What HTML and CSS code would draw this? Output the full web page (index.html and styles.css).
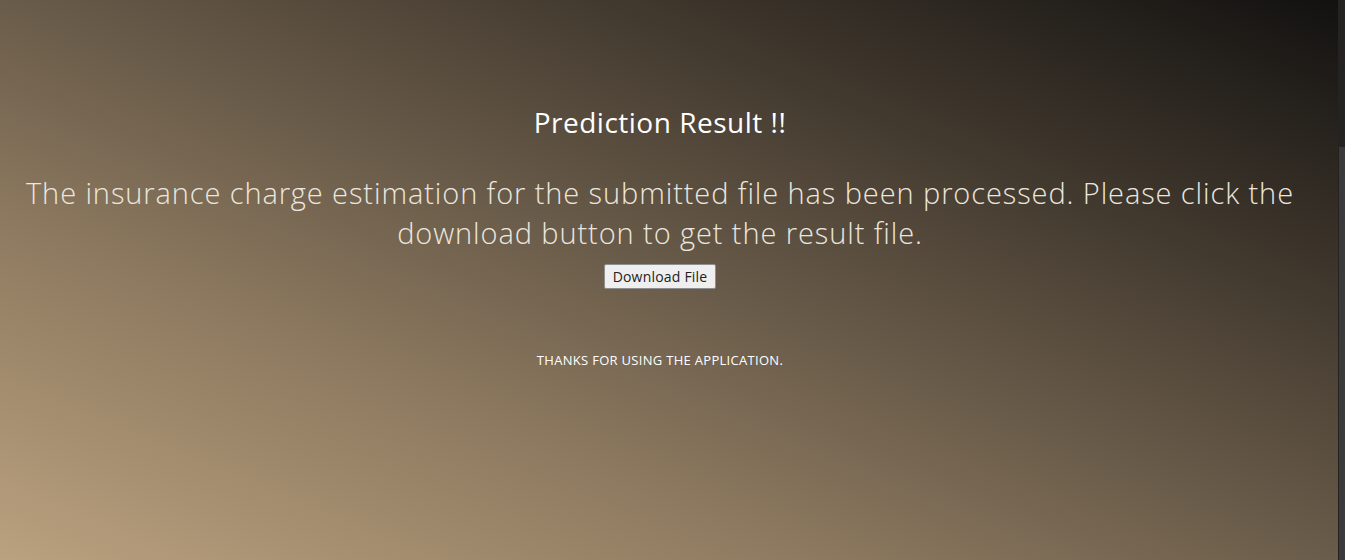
FILE: index.html
```html
<!DOCTYPE html>
<html lang="en">
<head>
<meta charset="utf-8">
<title>Prediction Result</title>
<link rel="stylesheet" href="styles.css">
</head>
<body>
<main class="page">
  <section class="result">
    <h2 class="result-title">Prediction Result !!</h2>
    <p class="result-text">The insurance charge estimation for the submitted file has been processed. Please click the download button to get the result file.</p>
    <button class="download-btn" type="button">Download File</button>
    <p class="thanks">THANKS FOR USING THE APPLICATION.</p>
  </section>
</main>
<div class="scrollbar"><div class="scrollbar-thumb"></div></div>
</body>
</html>
```
FILE: styles.css
```css
html, body {
  margin: 0;
  padding: 0;
  height: 100%;
  overflow: hidden;
}
body {
  font-family: "Open Sans", "Liberation Sans", sans-serif;
  color: #fff;
  background: linear-gradient(to top right, #baa17f 0%, #8e7a60 30%, #6a5c4a 50%, #433a2f 72%, #121110 100%);
}
.page {
  width: 1320px;
  height: 560px;
  box-sizing: border-box;
  padding-top: 103px;
}
.result {
  display: flex;
  flex-direction: column;
  align-items: center;
  text-align: center;
}
.result-title {
  margin: 0;
  font-size: 28px;
  font-weight: 400;
  letter-spacing: 0.5px;
  line-height: 38px;
  color: #fff;
}
.result-text {
  margin: 32px 0 0;
  max-width: 1300px;
  font-size: 29px;
  font-weight: 300;
  letter-spacing: 0.9px;
  line-height: 40px;
  color: #ebe6df;
}
.download-btn {
  margin-top: 11px;
  font-family: inherit;
  font-size: 14px;
  letter-spacing: 0.2px;
  color: #222;
  background: #efefef;
  border: 1px solid #8f8f8f;
  border-radius: 2px;
  padding: 3px 8px;
  height: 25px;
  line-height: 17px;
}
.thanks {
  margin: 62px 0 0;
  font-size: 13px;
  font-weight: 400;
  letter-spacing: 0.3px;
  color: #fff;
}
.scrollbar {
  position: fixed;
  top: 0;
  right: 0;
  width: 7px;
  height: 560px;
  background: #242322;
}
.scrollbar-thumb {
  position: absolute;
  left: 1px;
  right: 0;
  top: 147px;
  bottom: 0;
  background: #3a3a3a;
}
```
